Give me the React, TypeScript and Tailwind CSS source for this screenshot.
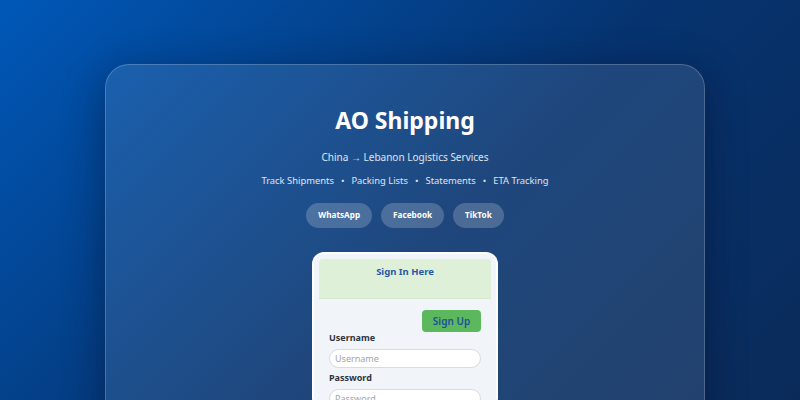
import React from 'react';

const links = ['WhatsApp', 'Facebook', 'TikTok'];
const features = ['Track Shipments', 'Packing Lists', 'Statements', 'ETA Tracking'];

export default function App() {
  return (
    <div
      className="h-[400px] overflow-hidden bg-[linear-gradient(135deg,#0058b8_0%,#06336f_55%,#0a2b5a_100%)] flex justify-center pl-[10px] pt-[64px]"
      style={{ fontFamily: '"Noto Sans", "Open Sans", sans-serif' }}
    >
      {/* Glass panel */}
      <div className="w-[600px] h-[420px] shrink-0 rounded-[24px] bg-white/10 border border-white/20 shadow-[0_10px_40px_rgba(0,10,40,0.45)] flex flex-col items-center pt-[39px] text-white">
        <h1 className="text-[23px] leading-[32px] font-bold">AO Shipping</h1>
        <p className="mt-[13px] text-[10px] leading-[16px] text-white/85">China → Lebanon Logistics Services</p>
        <p className="mt-[8px] text-[9.4px] leading-[16px] text-white/85 flex gap-[7px]">
          {features.map((f, i) => (
            <React.Fragment key={f}>
              {i > 0 && <span>•</span>}
              <span>{f}</span>
            </React.Fragment>
          ))}
        </p>
        <div className="mt-[14px] flex gap-[9px]">
          {links.map((l) => (
            <button
              key={l}
              className="h-[25px] px-[12px] rounded-full bg-white/20 text-[8.2px] font-bold text-white"
            >
              {l}
            </button>
          ))}
        </div>

        {/* Login card */}
        <div className="mt-[24px] w-[186px] rounded-[12px] bg-[#f1f4f8] border-2 border-white/80 p-[5px] pb-0">
          <div className="h-[40px] rounded-t-[4px] bg-[#dff0d8] border-b border-[#d6e6cf] flex justify-center pt-[6px]">
            <span className="text-[9.5px] leading-[14px] font-bold text-[#1e5aa8]">Sign In Here</span>
          </div>
          <div className="px-[10px] pt-[11px]">
            <div className="flex justify-end">
              <button className="h-[22px] w-[59px] rounded-[4px] bg-[#5cb85c] text-[10px] font-semibold text-[#1e4f9c]">
                Sign Up
              </button>
            </div>
            <label className="block text-[9px] leading-[12px] font-bold text-[#2d3540]">Username</label>
            <input
              placeholder="Username"
              className="mt-[4px] w-full h-[19px] rounded-full bg-white border border-[#d7dbe2] px-[5px] text-[9px] placeholder:text-[#a0a5ad] outline-none"
            />
            <label className="block mt-[4px] text-[9px] leading-[12px] font-bold text-[#2d3540]">Password</label>
            <input
              placeholder="Password"
              type="password"
              className="mt-[3px] w-full h-[19px] rounded-full bg-white border border-[#d7dbe2] px-[5px] text-[9px] placeholder:text-[#a0a5ad] outline-none"
            />
          </div>
        </div>
      </div>
    </div>
  );
}
